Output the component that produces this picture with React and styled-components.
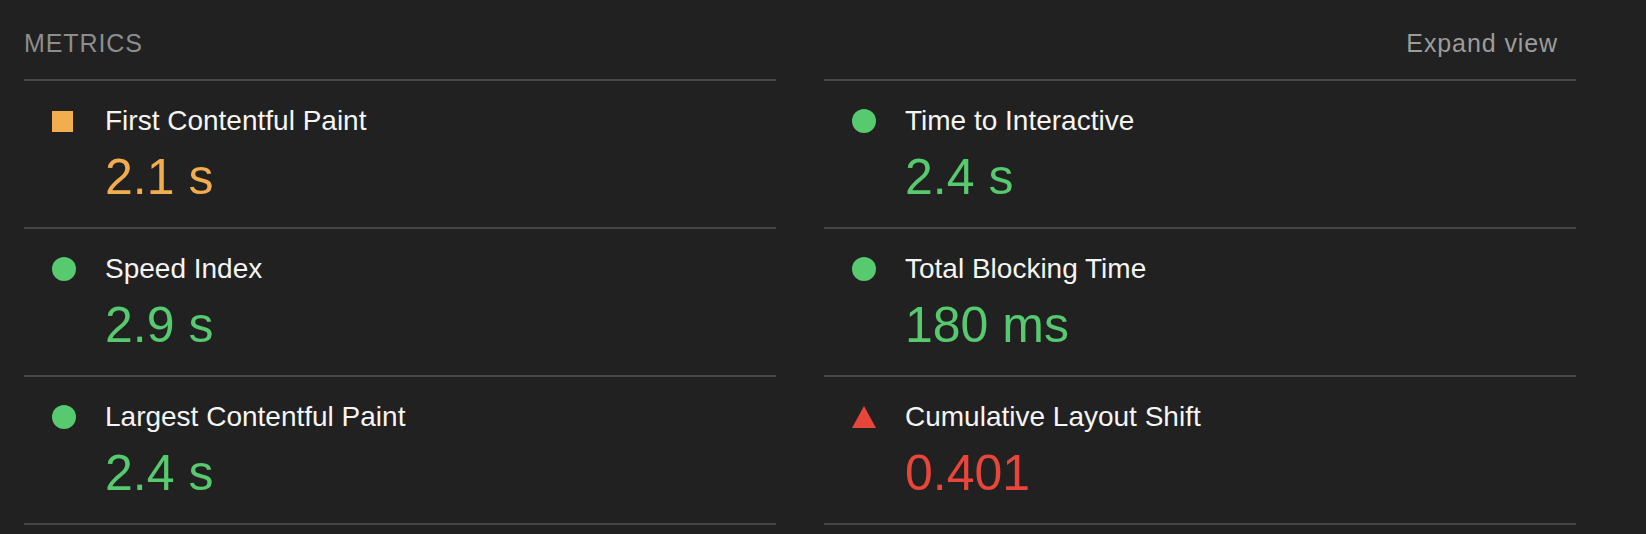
import React from 'react';
import styled, { createGlobalStyle } from 'styled-components';

const GlobalStyle = createGlobalStyle`
  html, body {
    margin: 0;
    padding: 0;
    background: #212121;
  }
  body {
    font-family: "Liberation Sans", Arial, Helvetica, sans-serif;
  }
`;

const colors = {
  pass: '#57c96f',
  average: '#f2ae4e',
  fail: '#e8453b'
};

const Wrapper = styled.div`
  width: 1576px;
  padding: 28px 0 0 24px;
  height: 534px;
  box-sizing: border-box;
`;

const Header = styled.div`
  display: flex;
  justify-content: space-between;
  align-items: center;
  height: 30px;
  margin-bottom: 21px;
  padding-right: 18px;
`;

const HeaderTitle = styled.div`
  font-size: 25px;
  line-height: 30px;
  letter-spacing: 0.9px;
  color: #8d8d8d;
  text-transform: uppercase;
`;

const ExpandButton = styled.button`
  background: none;
  border: none;
  padding: 0;
  font-family: inherit;
  font-size: 25px;
  line-height: 30px;
  letter-spacing: 0.9px;
  color: #9c9c9c;
  cursor: pointer;
`;

const Grid = styled.div`
  display: grid;
  grid-template-columns: 1fr 1fr;
  column-gap: 48px;
`;

const Metric = styled.div`
  display: flex;
  align-items: flex-start;
  gap: 29px;
  padding: 20px 0 20px 28px;
  border-top: 2px solid #464646;
  border-bottom: ${p => (p.$last ? '2px solid #464646' : 'none')};
`;

const IconBox = styled.div`
  width: 24px;
  height: 40px;
  flex: none;
  display: flex;
  align-items: center;
  justify-content: flex-start;
`;

const Square = styled.div`
  width: 21px;
  height: 21px;
  background: ${colors.average};
`;

const Dot = styled.div`
  width: 24px;
  height: 24px;
  border-radius: 50%;
  background: ${colors.pass};
`;

const Triangle = styled.div`
  width: 0;
  height: 0;
  border-left: 12px solid transparent;
  border-right: 12px solid transparent;
  border-bottom: 22px solid ${colors.fail};
`;

const Body = styled.div`
  display: flex;
  flex-direction: column;
  gap: 6px;
`;

const Title = styled.div`
  font-size: 28px;
  line-height: 40px;
  color: #f5f5f5;
`;

const Value = styled.div`
  font-size: 50px;
  line-height: 60px;
  color: ${p => colors[p.$rating]};
`;

const metrics = [
  { title: 'First Contentful Paint', value: '2.1 s', rating: 'average' },
  { title: 'Time to Interactive', value: '2.4 s', rating: 'pass' },
  { title: 'Speed Index', value: '2.9 s', rating: 'pass' },
  { title: 'Total Blocking Time', value: '180 ms', rating: 'pass' },
  { title: 'Largest Contentful Paint', value: '2.4 s', rating: 'pass' },
  { title: 'Cumulative Layout Shift', value: '0.401', rating: 'fail' }
];

const Icon = ({ rating }) => {
  if (rating === 'average') return <Square />;
  if (rating === 'fail') return <Triangle />;
  return <Dot />;
};

const App = () => {
  return (
    <Wrapper>
      <GlobalStyle />
      <Header>
        <HeaderTitle>Metrics</HeaderTitle>
        <ExpandButton>Expand view</ExpandButton>
      </Header>
      <Grid>
        {metrics.map((m, i) => (
          <Metric key={m.title} $last={i >= metrics.length - 2}>
            <IconBox>
              <Icon rating={m.rating} />
            </IconBox>
            <Body>
              <Title>{m.title}</Title>
              <Value $rating={m.rating}>{m.value}</Value>
            </Body>
          </Metric>
        ))}
      </Grid>
    </Wrapper>
  );
};

export default App;
